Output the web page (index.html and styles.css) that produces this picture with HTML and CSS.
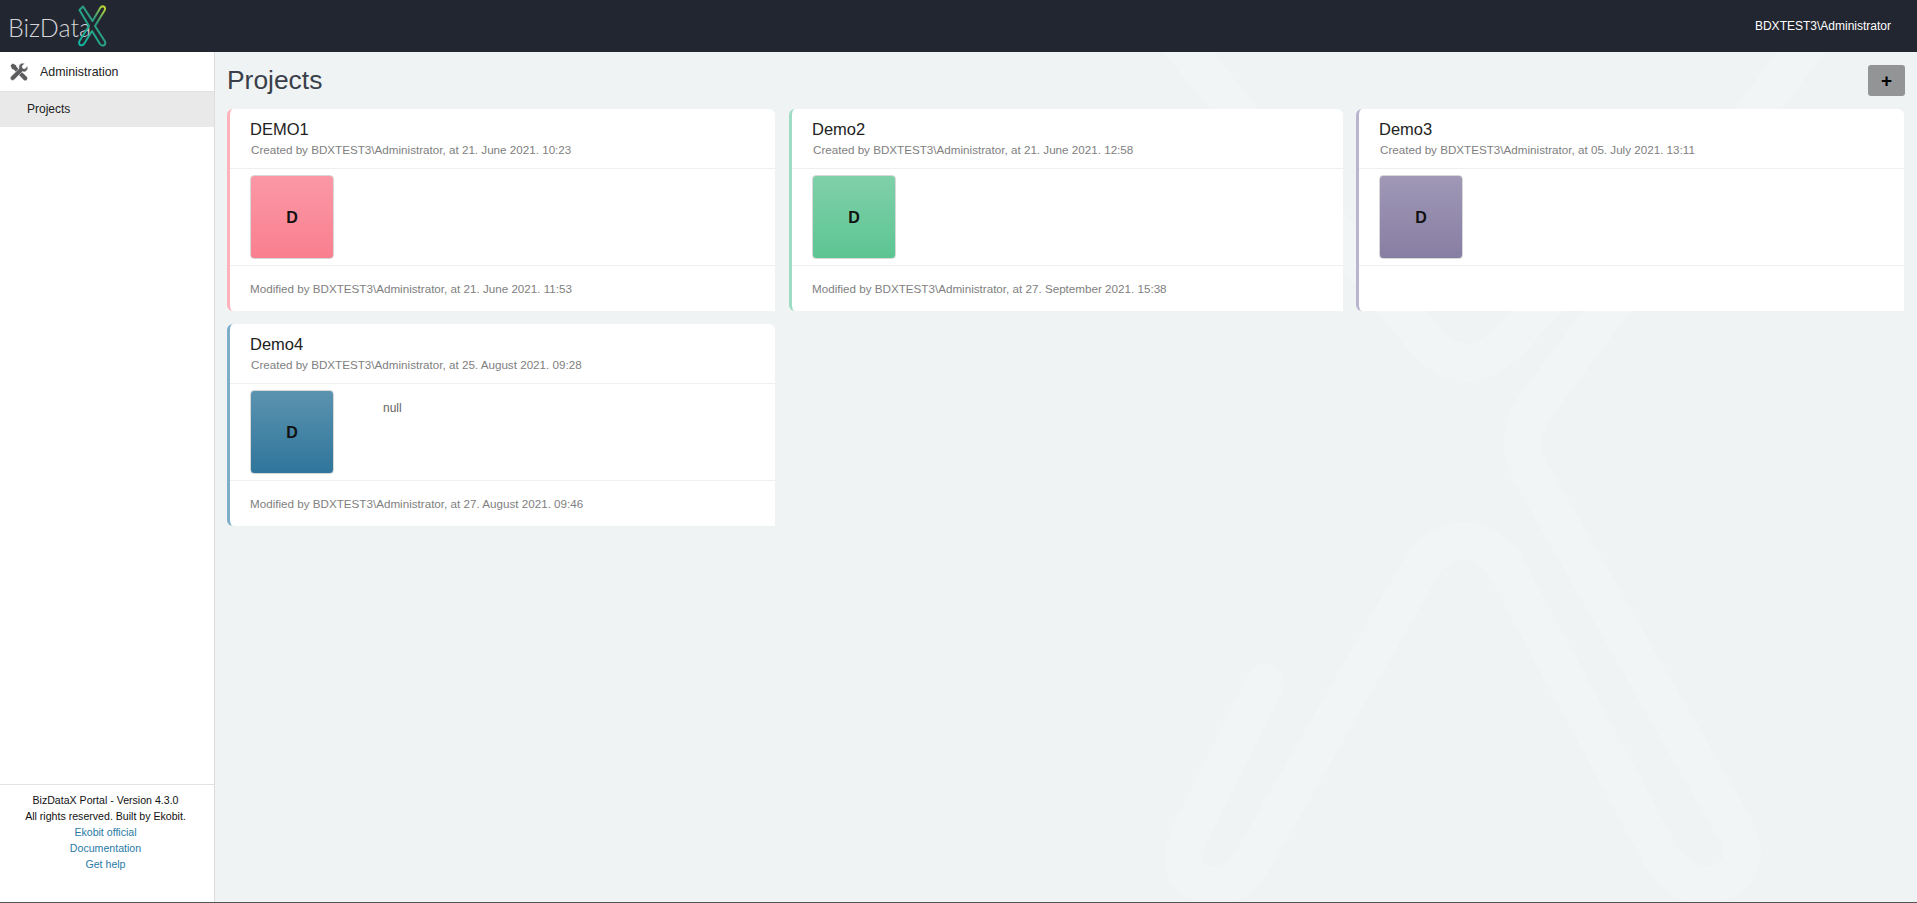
FILE: index.html

```html
<!DOCTYPE html>
<html lang="en">
<head>
  <meta charset="UTF-8">
  <title>BizDataX Portal - Projects</title>
  <meta name="viewport" content="width=device-width, initial-scale=1.0">
  <link rel="stylesheet" href="styles.css">
</head>
<body>
  <header class="topbar">
    <a class="logo">
      <span class="logo-text">BizData</span>
      <svg class="logo-x" width="30" height="44" viewBox="0 0 30 44" fill="none" aria-hidden="true">
        <defs>
          <linearGradient id="logoGrad" x1="1" y1="0" x2="0" y2="1">
            <stop offset="0" stop-color="#c9d62c"/>
            <stop offset="0.35" stop-color="#2f9c7c"/>
            <stop offset="1" stop-color="#10b5a2"/>
          </linearGradient>
        </defs>
        <path d="M2.5 6 L6 2.5 L15.5 17 L23.5 3.5 Q25.5 1.5 27.5 3 Q28.5 4.5 27.5 6.5 L18 22 L28 37.5 Q29 40.5 26.5 41.5 Q24.5 42 23 40 L15 27 L7 40 Q5 42 3 41 Q1.5 39.5 2.5 37 L12 22 Z" stroke="url(#logoGrad)" stroke-width="2" stroke-linejoin="round"/>
      </svg>
    </a>
    <span class="user">BDXTEST3\Administrator</span>
  </header>

  <div class="layout">
    <aside class="sidebar">
      <div class="nav-head">
        <svg class="nav-icon" width="18" height="18" viewBox="0 0 18 18" aria-hidden="true">
          <path d="M.6 2.6 L2.6 .4 L6 2.2 L6.6 4 L17 14 Q18 15.8 16.7 16.9 Q15.2 18 13.8 16.9 L3.8 6.6 L2 6 Z"/>
          <path d="M17.6 3 L14.8 5.8 L12.6 5.2 L12.1 3 L14.8 .4 Q11.2 -.6 9.5 1.8 Q8.4 3.6 9.1 5.6 L.9 13.6 Q-.4 15.3 .9 16.8 Q2.6 18.1 4.2 16.8 L12.4 8.6 Q14.6 9.4 16.4 8 Q18.4 6 17.6 3 Z" stroke="#fff" stroke-width=".5"/>
        </svg>
        <span>Administration</span>
      </div>
      <a class="nav-item">Projects</a>
      <footer class="side-foot">
        <div>BizDataX Portal - Version 4.3.0</div>
        <div>All rights reserved. Built by Ekobit.</div>
        <a>Ekobit official</a>
        <a>Documentation</a>
        <a>Get help</a>
      </footer>
    </aside>

    <main class="content">
      <svg class="watermark" width="1702" height="850" viewBox="215 52 1702 850" fill="none" aria-hidden="true">
        <path d="M1265 683 L1188 838 Q1172 885 1216 885 Q1240 885 1254 858 L1425 560 Q1464 522 1502 560 L1662 858 Q1680 885 1707 885 Q1750 880 1740 838 L1535 480 Q1508 440 1540 400 L1810 40" stroke-width="38" stroke-linecap="round" stroke-linejoin="round"/>
        <path d="M1178 40 L1425 340 Q1465 385 1510 340 L1640 200" stroke-width="38" stroke-linecap="round" stroke-linejoin="round"/>
      </svg>

      <div class="page-head">
        <h1>Projects</h1>
        <button class="add-btn">+</button>
      </div>

      <div class="projects">
        <article class="card card-pink">
          <div class="card-head">
            <h2>DEMO1</h2>
            <p>Created by BDXTEST3\Administrator, at 21. June 2021. 10:23</p>
          </div>
          <div class="card-body">
            <div class="tile tile-pink">D</div>
          </div>
          <div class="card-foot">Modified by BDXTEST3\Administrator, at 21. June 2021. 11:53</div>
        </article>

        <article class="card card-wide card-green">
          <div class="card-head">
            <h2>Demo2</h2>
            <p>Created by BDXTEST3\Administrator, at 21. June 2021. 12:58</p>
          </div>
          <div class="card-body">
            <div class="tile tile-green">D</div>
          </div>
          <div class="card-foot">Modified by BDXTEST3\Administrator, at 27. September 2021. 15:38</div>
        </article>

        <article class="card card-end card-purple">
          <div class="card-head">
            <h2>Demo3</h2>
            <p>Created by BDXTEST3\Administrator, at 05. July 2021. 13:11</p>
          </div>
          <div class="card-body">
            <div class="tile tile-purple">D</div>
          </div>
          <div class="card-foot"></div>
        </article>

        <article class="card card-blue">
          <div class="card-head">
            <h2>Demo4</h2>
            <p>Created by BDXTEST3\Administrator, at 25. August 2021. 09:28</p>
          </div>
          <div class="card-body">
            <div class="tile tile-blue">D</div>
            <div class="card-desc">null</div>
          </div>
          <div class="card-foot">Modified by BDXTEST3\Administrator, at 27. August 2021. 09:46</div>
        </article>
      </div>
    </main>
  </div>
</body>
</html>
```

FILE: styles.css

```css
* { box-sizing: border-box; }
html, body { height: 100%; }
body { margin: 0; background: #555; font-family: "Liberation Sans", Arial, sans-serif; font-size: 12px; color: #222; overflow: hidden; }

.topbar { height: 52px; background: #222630; display: flex; align-items: center; justify-content: space-between; padding: 0 26px 0 8px; }
.logo { display: flex; align-items: center; position: relative; }
.logo-text { font-family: Lato, sans-serif; font-weight: 300; font-size: 25px; color: #d3d5d8; margin-top: 2px; }
.logo-x { margin-left: -14px; margin-top: -1px; }
.user { color: #fff; font-size: 12px; margin-top: -1px; }

.layout { display: flex; height: 850px; }

.sidebar { width: 215px; background: #fff; border-right: 1px solid #ddd; display: flex; flex-direction: column; }
.nav-head { height: 40px; display: flex; align-items: center; padding-left: 10px; gap: 12px; border-bottom: 1px solid #e2e2e2; font-size: 12.4px; color: #222; }
.nav-icon { fill: #5c5c5f; flex: none; }
.nav-item { height: 35px; line-height: 34px; padding-left: 27px; background: #e9e9e9; color: #222; }
.side-foot { margin-top: auto; height: 118px; border-top: 1px solid #e3e3e3; padding: 7px 3px 0 0; text-align: center; line-height: 16px; font-size: 10.6px; color: #111; }
.side-foot a { display: block; color: #2a7aa6; }

.content { flex: 1; position: relative; background: #eff3f4; padding: 0 13px 0 12px; overflow: hidden; }
.watermark { position: absolute; left: 0; top: 0; stroke: #f1f5f5; }
.page-head { position: relative; display: flex; justify-content: space-between; height: 57px; padding-top: 13px; }
.page-head h1 { margin: -1px 0 0; font-size: 26.4px; font-weight: 400; line-height: 32px; color: #3a3f4a; }
.add-btn { width: 37px; height: 31px; border: 0; border-radius: 3px; background: #939496; color: #000; font-family: inherit; font-size: 19px; font-weight: 700; line-height: 31px; padding: 0; margin-right: -1px; }

.projects { position: relative; display: flex; flex-wrap: wrap; align-items: flex-start; row-gap: 13px; }
.card { width: 548px; height: 202px; margin-right: 14px; background: #fff; border-left: 3px solid #ccc; border-radius: 6px 6px 0 6px; display: flex; flex-direction: column; }
.card-wide { width: 554px; margin-right: 13px; }
.card-end { margin-right: 0; }
.card-pink { border-left-color: #ffb2bc; }
.card-green { border-left-color: #9edcc4; }
.card-purple { border-left-color: #b9b5cf; }
.card-blue { border-left-color: #7eaec7; }

.card-head { height: 60px; border-bottom: 1px solid #eef0f0; padding: 10px 0 0 20px; }
.card-head h2 { margin: 0; font-size: 16.5px; font-weight: 400; line-height: 21px; color: #222; }
.card-head p { margin: 2px 0 0 1px; line-height: 16px; font-size: 11.65px; color: #808080; }
.card-body { height: 97px; border-bottom: 1px solid #eef0f0; padding: 6px 0 0 20px; display: flex; align-items: flex-start; }
.card-foot { flex: 1; padding: 15px 0 0 20px; line-height: 16px; font-size: 11.65px; color: #808080; }
.card-desc { margin: 10px 0 0 49px; line-height: 16px; color: #666; }

.tile { width: 84px; height: 84px; padding-top: 1px; border: 1px solid #d8d8d8; border-radius: 4px; display: flex; align-items: center; justify-content: center; font-size: 16px; font-weight: 700; color: #111; }
.tile-pink { background: linear-gradient(#fb98a6, #f97f8e); }
.tile-green { background: linear-gradient(#80d0aa, #5cc592); }
.tile-purple { background: linear-gradient(#a098b6, #877ea3); }
.tile-blue { background: linear-gradient(#5b93af, #2f759b); }
```
